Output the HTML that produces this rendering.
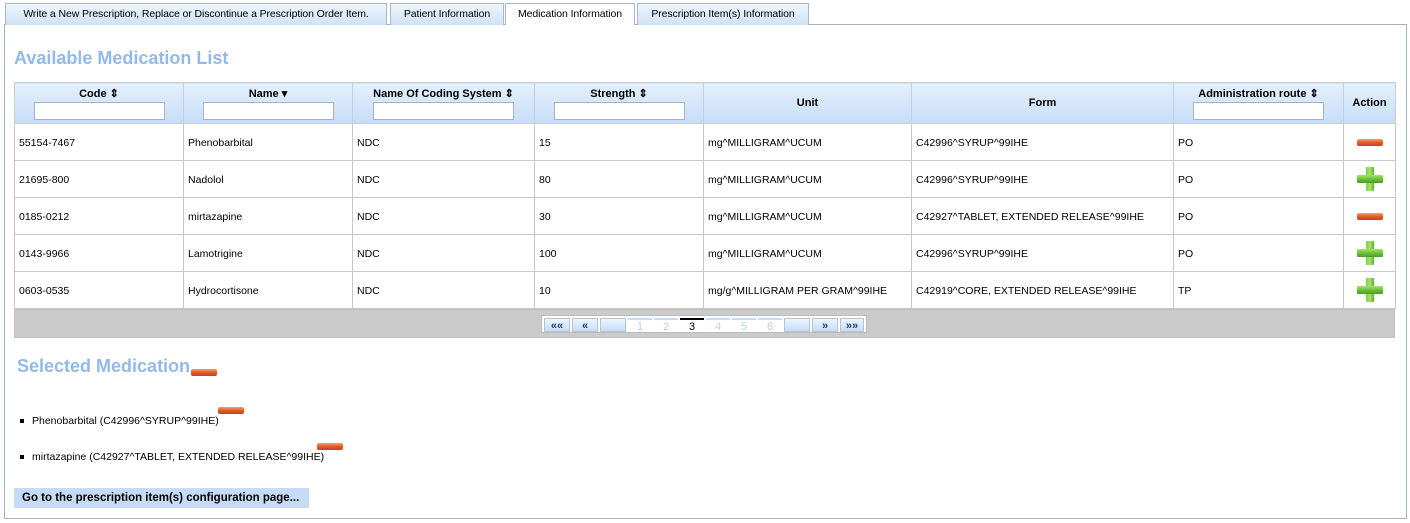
<!DOCTYPE html>
<html><head><style>
*{box-sizing:border-box;margin:0;padding:0}
body{width:1410px;height:523px;background:#fff;font-family:"Liberation Sans",Arial,sans-serif;font-size:10.5px;color:#000;position:relative;overflow:hidden}
.tab{position:absolute;top:3px;height:22px;border:1px solid #a8b8cc;border-bottom:none;background:linear-gradient(#eef5fd,#cfe2f7);font-size:10.5px;line-height:20px;text-align:center;color:#000;letter-spacing:-0.1px}
.tab.act{background:#fff;height:22px;border-color:#a8b8cc}
.panel{position:absolute;left:4px;top:24px;width:1403px;height:495px;border:1px solid #a8b0bc}
.h{position:absolute;color:#93b9ea;font-weight:bold;font-size:18px}
table{position:absolute;left:14px;top:82px;border-collapse:collapse;width:1381px;table-layout:fixed}
th{height:41px;background:linear-gradient(#e4f0fd,#c6ddf8);border:1px solid #c8ced6;font-weight:bold;font-size:11px;vertical-align:middle;padding:0}
th input{display:block;margin:2px auto 0;width:131px;height:18px;border:1px solid #a9b3bf;background:#fff}
td{height:37px;border:1px solid #c8c8c8;padding-left:4px;padding-top:2px;font-size:10.5px}
td.a{text-align:center;padding:0}
.minus{display:inline-block;width:26px;height:7px;border-radius:2px;background:linear-gradient(#f8a070,#e05a28 50%,#c8401c);vertical-align:middle}
.plus{display:inline-block;position:relative;width:26px;height:24px;vertical-align:middle}
.plus:before{content:"";position:absolute;left:9px;top:0;width:8px;height:24px;background:linear-gradient(90deg,#7fcf48,#a6e36a,#5ab02a);border-radius:1px}
.plus:after{content:"";position:absolute;left:0;top:8px;width:26px;height:8px;background:linear-gradient(#a6e36a,#6cc238,#4a9e22);border-radius:1px}
.foot{position:absolute;left:14px;top:309px;width:1381px;height:29px;background:#cbcbcb;border:1px solid #c0c0c0}
.pg{position:absolute;top:315px;left:541px;width:326px;height:18px;background:#fff;border:1px solid #bbb}
.pg span{position:absolute;top:2px;height:14px;font-size:11px;line-height:14px;text-align:center}
.pb{background:linear-gradient(#eef5fd,#c6dcf6);border:1px solid #b0c4dc;color:#1c3c70;font-weight:bold;font-size:9px}
.pn{color:#b8cfee;border-top:2px solid #c6dcf6}
li{position:absolute;left:20px;list-style:none;font-size:10.5px}
li:before{content:"";display:inline-block;width:4px;height:4px;background:#000;margin-right:8px;vertical-align:middle}
</style></head><body>
<div class="panel"></div>
<div class="tab" style="left:5px;width:382px">Write a New Prescription, Replace or Discontinue a Prescription Order Item.</div>
<div class="tab" style="left:390px;width:114px">Patient Information</div>
<div class="tab act" style="left:505px;width:130px">Medication Information</div>
<div class="tab" style="left:637px;width:172px">Prescription Item(s) Information</div>
<div class="h" style="left:14px;top:48px">Available Medication List</div>
<table>
<colgroup><col style="width:169px"><col style="width:169px"><col style="width:182px"><col style="width:169px"><col style="width:208px"><col style="width:262px"><col style="width:170px"><col style="width:52px"></colgroup>
<tr><th>Code ⇕<input></th><th>Name ▾<input></th><th>Name Of Coding System ⇕<input style="width:141px"></th><th>Strength ⇕<input></th><th>Unit</th><th>Form</th><th>Administration route ⇕<input></th><th>Action</th></tr>
<tr><td>55154-7467</td><td>Phenobarbital</td><td>NDC</td><td>15</td><td>mg^MILLIGRAM^UCUM</td><td>C42996^SYRUP^99IHE</td><td>PO</td><td class="a"><span class="minus"></span></td></tr>
<tr><td>21695-800</td><td>Nadolol</td><td>NDC</td><td>80</td><td>mg^MILLIGRAM^UCUM</td><td>C42996^SYRUP^99IHE</td><td>PO</td><td class="a"><span class="plus"></span></td></tr>
<tr><td>0185-0212</td><td>mirtazapine</td><td>NDC</td><td>30</td><td>mg^MILLIGRAM^UCUM</td><td>C42927^TABLET, EXTENDED RELEASE^99IHE</td><td>PO</td><td class="a"><span class="minus"></span></td></tr>
<tr><td>0143-9966</td><td>Lamotrigine</td><td>NDC</td><td>100</td><td>mg^MILLIGRAM^UCUM</td><td>C42996^SYRUP^99IHE</td><td>PO</td><td class="a"><span class="plus"></span></td></tr>
<tr><td>0603-0535</td><td>Hydrocortisone</td><td>NDC</td><td>10</td><td>mg/g^MILLIGRAM PER GRAM^99IHE</td><td>C42919^CORE, EXTENDED RELEASE^99IHE</td><td>TP</td><td class="a"><span class="plus"></span></td></tr>
</table>
<div class="foot"></div>
<div class="pg">
<span class="pb" style="left:2px;width:26px">««</span>
<span class="pb" style="left:30px;width:26px">«</span>
<span class="pb" style="left:58px;width:26px"></span>
<span class="pn" style="left:86px;width:24px">1</span>
<span class="pn" style="left:112px;width:24px">2</span>
<span style="left:138px;width:24px;border-top:2px solid #000;color:#000">3</span>
<span class="pn" style="left:164px;width:24px">4</span>
<span class="pn" style="left:190px;width:24px">5</span>
<span class="pn" style="left:216px;width:24px">6</span>
<span class="pb" style="left:242px;width:26px"></span>
<span class="pb" style="left:270px;width:26px">»</span>
<span class="pb" style="left:298px;width:24px">»»</span>
</div>
<div class="h" style="left:17px;top:356px">Selected Medication</div>
<span class="minus" style="position:absolute;left:191px;top:369px"></span>
<li style="top:415px">Phenobarbital (C42996^SYRUP^99IHE)</li>
<span class="minus" style="position:absolute;left:218px;top:407px"></span>
<li style="top:451px">mirtazapine (C42927^TABLET, EXTENDED RELEASE^99IHE)</li>
<span class="minus" style="position:absolute;left:317px;top:443px"></span>
<div style="position:absolute;left:14px;top:488px;width:295px;height:20px;background:#c6dcf6;font-weight:bold;font-size:11.5px;line-height:20px;padding-left:8px">Go to the prescription item(s) configuration page...</div>
</body></html>
